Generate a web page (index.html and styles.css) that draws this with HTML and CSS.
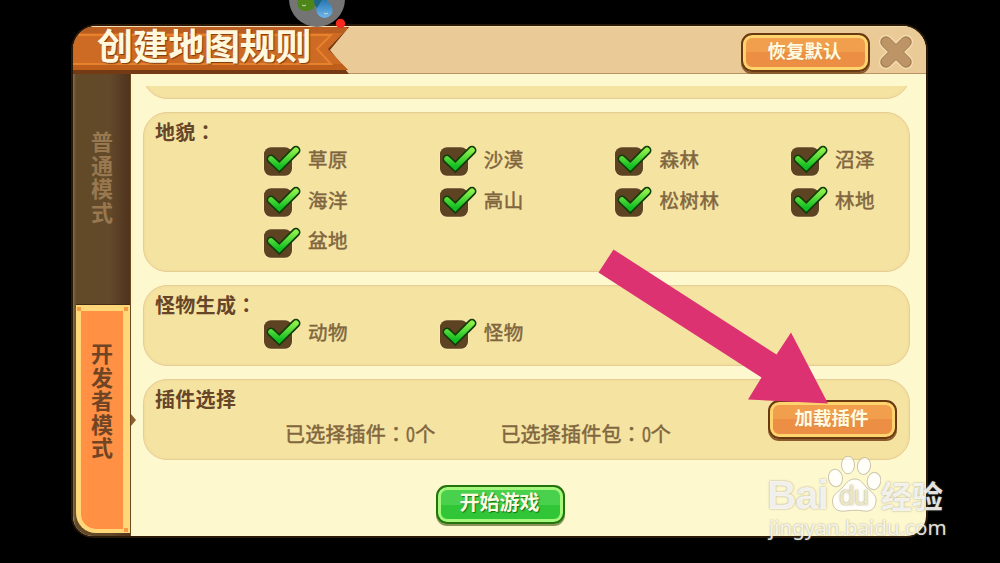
FILE: index.html
```html
<!DOCTYPE html>
<html lang="zh-CN">
<head>
    <meta charset="UTF-8">
    <meta name="viewport" content="width=device-width, initial-scale=1.0">
    <title>创建地图规则</title>
    <link rel="stylesheet" href="styles.css">
</head>
<body>
    <!-- shared icon -->
    <svg class="defs" width="0" height="0">
        <defs>
            <linearGradient id="tick" x1="0" y1="0" x2="0" y2="1">
                <stop offset="0" stop-color="#8af04a"/>
                <stop offset="1" stop-color="#10bd22"/>
            </linearGradient>
            <symbol id="check" viewBox="0 0 40 34">
                <rect x="1.300" y="2.700" width="29.400" height="30" rx="8" fill="#fbeebb" opacity=".7"/>
                <rect x="2" y="3.300" width="28" height="28.400" rx="7" fill="#5e4322"/>
                <path d="M9 15 L17.300 22.900 L34 6.300" fill="none" stroke="#123d08" stroke-width="9" stroke-linecap="round" stroke-linejoin="miter"/>
                <path d="M9 15 L17.300 22.900 L34 6.300" fill="none" stroke="url(#tick)" stroke-width="5.600" stroke-linecap="round" stroke-linejoin="miter"/>
            </symbol>
        </defs>
    </svg>

    <div class="window">
        <div class="header">
            <div class="ribbon">
                <svg class="ribbon-bg" width="276" height="47" viewBox="0 0 276 47">
                    <path d="M0 0 H276 L257 23 L276 47 H0 Z" fill="#733a13"/>
                    <path d="M0 1 H275 L255 22 L275 43 H0 Z" fill="#cd6b24"/>
                    <path d="M0 0 H274 L270 6 H0 Z" fill="#b95d20"/>
                    <path d="M0 37 H269 L275 43 H0 Z" fill="#bd5e1b"/>
                    <path d="M0 8 H258 L244 22 L258 37 H0" fill="none" stroke="#e8812b" stroke-width="2"/>
                </svg>
                <h1>创建地图规则</h1>
            </div>
            <button class="btn btn-orange" id="resetButton">恢复默认</button>
            <svg class="close" width="36" height="36" viewBox="0 0 36 36">
                <path d="M8 8 L28 28 M28 8 L8 28" stroke="#f6dfb4" stroke-width="14" stroke-linecap="round"/>
                <path d="M8 8 L28 28 M28 8 L8 28" stroke="#a17a4c" stroke-width="11.500" stroke-linecap="round"/>
                <path d="M8.400 8.400 L27.600 27.600 M27.600 8.400 L8.400 27.600" stroke="#bd9466" stroke-width="10" stroke-linecap="round"/>
            </svg>
        </div>

        <div class="main">
            <div class="tabs">
                <div class="tab"><span>普通模式</span></div>
                <div class="tab active">
                    <span class="tab-face">开发者模式</span>
                    <i class="dot tl"></i><i class="dot tr"></i><i class="dot br"></i>
                </div>
            </div>

            <div class="content">
                <div class="scroll">
                    <div class="card card-prev"></div>
                    <div class="card card-terrain">
                        <h2>地貌<span class="colon" lang="zh-TW">：</span></h2>
                        <div class="options">
                            <label><svg><use href="#check"/></svg>草原</label>
                            <label><svg><use href="#check"/></svg>沙漠</label>
                            <label><svg><use href="#check"/></svg>森林</label>
                            <label><svg><use href="#check"/></svg>沼泽</label>
                            <label><svg><use href="#check"/></svg>海洋</label>
                            <label><svg><use href="#check"/></svg>高山</label>
                            <label><svg><use href="#check"/></svg>松树林</label>
                            <label><svg><use href="#check"/></svg>林地</label>
                            <label><svg><use href="#check"/></svg>盆地</label>
                        </div>
                    </div>
                    <div class="card card-monster">
                        <h2>怪物生成<span class="colon" lang="zh-TW">：</span></h2>
                        <div class="options">
                            <label><svg><use href="#check"/></svg>动物</label>
                            <label><svg><use href="#check"/></svg>怪物</label>
                        </div>
                    </div>
                    <div class="card card-plugin">
                        <div class="plugin-info">
                            <h2>插件选择</h2>
                            <div class="counts">
                                <span>已选择插件<span class="colon" lang="zh-TW">：</span><span class="num">0</span>个</span>
                                <span>已选择插件包<span class="colon" lang="zh-TW">：</span><span class="num">0</span>个</span>
                            </div>
                        </div>
                        <button class="btn btn-orange" id="loadButton">加载插件</button>
                    </div>
                </div>
                <button class="btn btn-green" id="startButton">开始游戏</button>
            </div>
        </div>
    </div>

    <!-- floating ball -->
    <svg class="ball" width="60" height="30" viewBox="0 0 60 30">
        <defs>
            <linearGradient id="drop" x1="0" y1="0" x2="0" y2="1">
                <stop offset="0" stop-color="#2878b0"/>
                <stop offset="1" stop-color="#6fb6ee"/>
            </linearGradient>
        </defs>
        <circle cx="29" cy="-1" r="28" fill="#747474"/>
        <path d="M10 0 H27 C28 8 24 11 18 11 C11 11 8 6 10 0 Z" fill="#4d8518"/>
        <path d="M29 0 H39 C43 5 45 8 44.500 11 C43.500 20 30 20 28.500 11 C28 7 27.500 4 29 0 Z" fill="url(#drop)"/>
        <path d="M26 0 H34 L29 8 C27 6 26 3 26 0 Z" fill="#1b6686"/>
        <path d="M14 5 q2 2 4 0 M36 13 q2 2 4 0" fill="none" stroke="#c8dfc9" stroke-width="1"/>
        <circle cx="52.500" cy="23.500" r="4.700" fill="#f8291f"/>
    </svg>

    <!-- pointer arrow -->
    <svg class="arrow" width="232" height="156" viewBox="0 0 232 156">
        <polygon points="15.500,0.500 178.500,105.500 193,83.500 230,154.500 150,150.500 163.500,128.500 0.500,23.500" fill="#dc3272"/>
    </svg>

    <div class="watermark">
        <div class="logo">
            <span class="bai">Bai</span>
            <span class="paw">
                <svg width="54" height="58" viewBox="0 0 54 58">
                    <g fill="#fff" fill-opacity=".85" stroke="#aaa387" stroke-opacity=".6">
                        <ellipse cx="8.500" cy="23" rx="7" ry="8.700" transform="rotate(-12 8.500 23)"/>
                        <ellipse cx="21" cy="10" rx="6.500" ry="8.800"/>
                        <ellipse cx="37" cy="11" rx="6.500" ry="8.500" transform="rotate(10 37 11)"/>
                        <ellipse cx="47" cy="26" rx="6.700" ry="8.700" transform="rotate(8 47 26)"/>
                        <path d="M28 24 C34 24 36 29 40 33 C45 37 50 41 49 47 C48 54 43 57 37 56 C31 55 25 55 19 56 C11 57 6 54 5.500 47 C5 40 11 37 15 33 C19 29 21 24 28 24 Z"/>
                    </g>
                </svg>
                <span class="du">du</span>
            </span>
            <span class="jy">经验</span>
        </div>
        <div class="site">jingyan.baidu.com</div>
    </div>
</body>
</html>
```
FILE: styles.css
```css
* {
    box-sizing: border-box;
}
body {
    margin: 0;
    width: 1000px;
    height: 563px;
    padding: 26px 73px;
    background-color: #000;
    font-family: "Noto Sans CJK SC", sans-serif;
    overflow: hidden;
    position: relative;
}
.defs {
    position: absolute;
}
h1, h2 {
    margin: 0;
}
.window {
    width: 853px;
    height: 510px;
    border-radius: 24px 24px 20px 20px;
    background-color: #fef8cf;
    box-shadow: 0 0 0 2px #2a1909;
    overflow: hidden;
}

/* header */
.header {
    display: flex;
    height: 48px;
    background-color: #eaca97;
    border-top: 1px solid #f3ddb2;
    border-bottom: 1px solid #b89263;
}
.ribbon {
    position: relative;
    width: 276px;
    margin-right: 392px;
}
.ribbon-bg {
    position: absolute;
    left: 0;
    top: 0;
}
h1 {
    position: relative;
    padding-left: 24px;
    font-size: 36px;
    line-height: 34px;
    font-weight: bold;
    letter-spacing: -0.3px;
    color: #fff8dc;
    text-shadow: 1px 1px 1px #7b3b12;
    white-space: nowrap;
}
.close {
    margin: 7px 0 0 8px;
}

/* buttons */
.btn {
    width: 129px;
    height: 39px;
    padding: 0 2px 6px 0;
    border-radius: 11px;
    font-family: inherit;
    font-size: 18.5px;
    font-weight: bold;
    line-height: 28px;
    color: #fffbe0;
}
.btn-orange {
    border: 2px solid #693a11;
    background: linear-gradient(#f19f4d 50%, #ec8f44 50%);
    box-shadow: inset 0 0 0 3px #fdd46d, 0 2px 0 #8b5b2c;
    text-shadow: 0 1px 1px #d98a45;
}
.header .btn {
    margin-top: 6px;
}
.btn-green {
    border: 2px solid #24720c;
    background: linear-gradient(#49d04c 50%, #30c638 50%);
    box-shadow: inset 0 0 0 3px #a4f77a, 0 2px 0 #8b9359;
    text-shadow: 1px 1px 1px #17701a;
    font-size: 20px;
}

/* side tabs */
.main {
    display: flex;
    height: 462px;
}
.tabs {
    width: 58px;
    padding-left: 3px;
    display: flex;
    flex-direction: column;
    background: linear-gradient(90deg, #86704a 0, #624a28 3px, #62492a 65%, #51351f 96%);
    border-right: 1px solid #6b4a20;
}
.tab {
    height: 230px;
    padding: 57px 0 0 14px;
    writing-mode: vertical-rl;
    line-height: 24px;
    font-size: 22px;
    font-weight: bold;
    letter-spacing: 1.5px;
    color: #997850;
    display: flex;
    flex-direction: column;
    justify-content: flex-end;
}
.tab.active {
    position: relative;
    display: block;
    height: 229px;
    padding: 6px 7px 4px 5px;
    border-top: 1px solid #432c15;
    border-radius: 0 0 0 20px;
    background-color: #ffd778;
    color: #704525;
}
.tab-face {
    display: block;
    width: 42px;
    height: 218px;
    padding: 32px 9px 0 9px;
    border-radius: 0 0 0 15px;
    background-color: #ff9044;
}
.dot {
    position: absolute;
    width: 4px;
    height: 4px;
    background-color: #f79843;
}
.tl { left: 1px; top: 2px; }
.tr { right: 2px; top: 2px; }
.br { right: 2px; bottom: 1px; }

/* content */
.content {
    position: relative;
    width: 795px;
    padding: 12px 16px 0 12px;
}
.content::before {
    content: "";
    position: absolute;
    left: 0;
    top: 340px;
    border-left: 5px solid #8b602f;
    border-top: 6px solid transparent;
    border-bottom: 6px solid transparent;
}
.scroll {
    height: 375px;
    overflow: hidden;
}
.card {
    border: 1px solid #e6cd94;
    border-radius: 24px;
    background-color: #f5e3a2;
    box-shadow: inset 0 0 3px #efd795;
    margin-bottom: 13px;
    padding: 8px 0 0 11px;
}
.card-prev {
    height: 80px;
    margin-top: -67px;
}
.card-terrain {
    height: 160px;
}
.card-monster {
    height: 81px;
}
.card-plugin {
    display: flex;
    height: 81px;
}
h2 {
    font-size: 20px;
    line-height: 22px;
    font-weight: bold;
    letter-spacing: 0.3px;
    color: #674529;
}
.colon {
    font-family: "Noto Sans CJK TC", sans-serif;
}
.options {
    display: grid;
    grid-template-columns: repeat(4, 175.7px);
    grid-auto-rows: 40.7px;
    margin: -4px 0 0 107px;
}
.options label {
    display: flex;
    padding-top: 3px;
    font-size: 19.5px;
    line-height: 34px;
    letter-spacing: 0.5px;
    color: #80663f;
    -webkit-text-stroke: 0.5px #80663f;
}
.options svg {
    width: 40px;
    height: 34px;
    margin: 2.3px 6px 0 0;
    flex: none;
}
.plugin-info {
    width: 613px;
}
.counts {
    display: flex;
    gap: 65px;
    margin: 12px 0 0 130px;
    font-size: 20px;
    line-height: 24px;
    letter-spacing: 0.2px;
    color: #80663f;
    -webkit-text-stroke: 0.5px #80663f;
    white-space: nowrap;
}
.num {
    display: inline-block;
    width: 9px;
    transform: scaleX(0.8);
    transform-origin: left;
}
.card-plugin .btn {
    margin-top: 12px;
}
.content > .btn {
    display: block;
    margin: 24px 0 0 293px;
}

/* overlays */
.ball {
    position: absolute;
    left: 288px;
    top: 0;
}
.arrow {
    position: absolute;
    left: 598px;
    top: 249px;
}
.watermark {
    position: absolute;
    left: 767px;
    top: 455px;
    color: rgba(255, 255, 255, 0.85);
    font-family: "Liberation Sans", sans-serif;
    text-shadow: 0 0 2px rgba(125, 118, 90, 0.7);
}
.logo {
    display: flex;
    height: 58px;
    align-items: flex-end;
}
.bai {
    width: 60px;
    font-size: 41px;
    font-weight: bold;
    line-height: 36px;
    letter-spacing: -1px;
}
.paw {
    position: relative;
    width: 54px;
    height: 58px;
}
.du {
    position: absolute;
    left: 12px;
    top: 27px;
    font-size: 28px;
    line-height: 28px;
    letter-spacing: -1px;
    color: #eee7c4;
}
.jy {
    font-family: "Noto Sans CJK SC", sans-serif;
    font-size: 31px;
    font-weight: bold;
    line-height: 37px;
}
.site {
    padding-left: 2px;
    font-family: "Noto Sans", sans-serif;
    font-size: 20.5px;
    line-height: 28px;
}
```
